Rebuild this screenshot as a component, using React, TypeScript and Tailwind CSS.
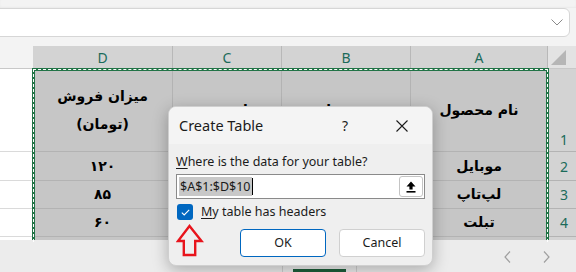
const ui = "font-['Noto_Sans',sans-serif]"
const fa = "font-['DejaVu_Sans',sans-serif]"

const dataRows = [
  { n: 2, d: "۱۲۰", a: "موبایل", h: "h-[29px]" },
  { n: 3, d: "۸۵", a: "لپ‌تاپ", h: "h-[28px]" },
  { n: 4, d: "۶۰", a: "تبلت", h: "h-[28px]" },
]

const cell = "border-r border-b border-[#b3b3b3] bg-[#c6c6c6] flex items-center justify-center"

const CreateTableDialog = () => {
  return (
    <div className={`absolute left-[168px] top-[106px] w-[265px] h-[160px] rounded-lg overflow-hidden shadow-[0_4px_16px_rgba(0,0,0,0.28)] border border-[#cfcfcf] bg-[#efefef] text-[#1b1b1b] ${ui}`}>
      {/* title bar */}
      <div className="h-[37px] bg-[#f4f4f4] flex items-center pl-[10px] pr-[24px]">
        <span className="text-[14.5px]">Create Table</span>
        <span className="ml-auto text-[14px] mr-[48px]">?</span>
        <svg width="12" height="12" viewBox="0 0 12 12" stroke="#1b1b1b" strokeWidth="1.1">
          <path d="M0.5 0.5 L11.5 11.5 M11.5 0.5 L0.5 11.5" />
        </svg>
      </div>

      {/* body */}
      <div className="px-[7px] pt-[9px]">
        <div className="h-[18px] flex items-center text-[12.5px] leading-none">
          <span className="underline underline-offset-2">W</span>here is the data for your table?
        </div>
        <div className="mt-[3px] h-[25px] bg-white border border-[#8a8a8a] flex items-center pl-[2px] pr-[1px]">
          <span className="bg-[#c8c8c8] text-[12.5px] leading-[19px] px-[1px]">$A$1:$D$10</span>
          <span className="w-px h-[17px] bg-black" />
          <div className="ml-auto w-[24px] h-[21px] bg-white border border-[#c4c4c4] rounded-[3px] flex items-center justify-center">
            <svg width="10" height="12" viewBox="0 0 10 12" fill="#000">
              <path d="M5 0.5 L9.5 5.5 L6.6 5.5 L6.6 8.5 L3.4 8.5 L3.4 5.5 L0.5 5.5 Z" />
              <rect x="0.5" y="10" width="9" height="1.6" />
            </svg>
          </div>
        </div>
        <div className="mt-[5px] h-[16px] flex items-center gap-[8px] pl-px">
          <div className="w-[16px] h-[16px] rounded-[3px] bg-[#0067c0] flex items-center justify-center">
            <svg width="9" height="7" viewBox="0 0 9 7" fill="none" stroke="white" strokeWidth="1.1">
              <path d="M0.8 3.6 L3.2 5.9 L8.2 0.9" />
            </svg>
          </div>
          <span className="text-[12.5px] leading-none">
            <span className="underline underline-offset-2">M</span>y table has headers
          </span>
        </div>
        <div className="mt-[4px] flex items-start">
          <svg width="28" height="33" viewBox="0 0 28 33" fill="none" stroke="#e8141c" strokeWidth="2.4" strokeLinejoin="miter">
            <path d="M13.5 2 L2 17 L7.8 17 L7.8 31 L19.2 31 L19.2 17 L25.5 17 Z" />
          </svg>
          <div className="ml-auto mt-[5px] flex gap-[13px]">
            <button className="w-[86px] h-[28px] bg-white border border-[#0067c0] rounded-[4px] text-[12.5px]">OK</button>
            <button className="w-[86px] h-[28px] bg-white border border-[#d0d0d0] rounded-[4px] text-[12.5px]">Cancel</button>
          </div>
        </div>
      </div>
    </div>
  )
}

export default function App() {
  return (
    <div className="relative w-[576px] h-[272px] overflow-hidden bg-[#f3f3f3]">
      {/* formula bar */}
      <div className="h-[8px] bg-[#f3f3f3] shadow-[inset_0_-1px_2px_rgba(0,0,0,0.04)]" />
      <div className="h-[29px] -ml-[10px] mr-[6px] bg-white border border-[#d6d6d6] rounded-r-md flex items-center justify-end pr-[6px]">
        <svg width="12" height="7" viewBox="0 0 12 7" fill="none" stroke="#8a8a8a" strokeWidth="1">
          <path d="M0.5 0.5 L6 6 L11.5 0.5" />
        </svg>
      </div>
      <div className="h-[9px]" />

      {/* sheet grid */}
      <div className={`grid grid-cols-[33px_140px_109px_129px_137px_32px] ${fa}`}>
        {/* column headers */}
        <div className="h-[23px] border-b border-[#c8c8c8]" />
        {["D", "C", "B", "A"].map((c) => (
          <div key={c} className={`h-[23px] bg-[#d3d3d3] border-r border-b border-[#b8b8b8] flex items-center justify-center text-[14px] text-[#1b6b5a] ${ui}`}>
            {c}
          </div>
        ))}
        <div className="h-[23px] bg-[#e3e3e3] border-b border-[#c8c8c8] pl-[3px] pt-[3px]">
          <svg width="16" height="17" viewBox="0 0 16 17">
            <path d="M15 1 L15 16 L0 16 Z" fill="#b6b6b6" />
          </svg>
        </div>

        {/* row 1 */}
        <div className="h-[83px] bg-white border-b border-[#dadada]" />
        <div className={`${cell} h-[83px] flex-col text-[14px] leading-[28px] font-bold`} dir="rtl">
          <span>میزان فروش</span>
          <span>(تومان)</span>
        </div>
        <div className={`${cell} h-[83px] text-[14px] font-bold`} dir="rtl">تعداد فروش</div>
        <div className={`${cell} h-[83px] text-[14px] font-bold`} dir="rtl">قیمت واحد</div>
        <div className={`${cell} h-[83px] text-[14px] font-bold`} dir="rtl">نام محصول</div>
        <div className={`h-[83px] bg-[#d3d3d3] border-b border-[#b3b3b3] flex items-end justify-center pb-[1px] text-[14px] text-[#1b6b5a] ${ui}`}>1</div>

        {/* data rows */}
        {dataRows.map((r) => (
          <div key={r.n} className="contents">
            <div className={`${r.h} bg-white border-b border-[#dadada]`} />
            <div className={`${cell} ${r.h} text-[14px] font-bold`} dir="rtl">{r.d}</div>
            <div className={`${cell} ${r.h}`} />
            <div className={`${cell} ${r.h}`} />
            <div className={`${cell} ${r.h} text-[14px] font-bold`} dir="rtl">{r.a}</div>
            <div className={`${r.h} bg-[#d3d3d3] border-b border-[#b3b3b3] flex items-center justify-center text-[14px] text-[#1b6b5a] ${ui}`}>{r.n}</div>
          </div>
        ))}

        {/* cut-off row 5 */}
        <div className="h-[3px] bg-white" />
        <div className="h-[3px] bg-[#c6c6c6] border-r border-[#b3b3b3]" />
        <div className="h-[3px] bg-[#c6c6c6] border-r border-[#b3b3b3]" />
        <div className="h-[3px] bg-[#c6c6c6] border-r border-[#b3b3b3]" />
        <div className="h-[3px] bg-[#c6c6c6] border-r border-[#b3b3b3]" />
        <div className="h-[3px] bg-[#d3d3d3]" />
      </div>

      {/* sheet tabs bar */}
      <div className="h-[32px] bg-[#ececec] flex items-end relative">
        <div className="ml-[282px] w-[75px] h-[7px] border-l border-r border-[#cfcfcf] flex justify-center items-end">
          <div className="w-[53px] h-[3px] bg-[#1e5e3a]" />
        </div>
        <span className={`ml-[20px] mb-[4px] text-[12px] leading-[14px] text-[#444] ${ui}`}>Sheet1</span>
        <div className="ml-auto mr-[26px] mb-[9px] flex gap-[32px]">
          <svg width="7" height="12" viewBox="0 0 7 12" fill="none" stroke="#a0a0a0" strokeWidth="1.2">
            <path d="M6 0.5 L1 6 L6 11.5" />
          </svg>
          <svg width="7" height="12" viewBox="0 0 7 12" fill="none" stroke="#a0a0a0" strokeWidth="1.2">
            <path d="M1 0.5 L6 6 L1 11.5" />
          </svg>
        </div>
      </div>

      {/* copy marquee around A1:D10 */}
      <div className="absolute left-[32px] top-[68px] w-[517px] h-[172px] border-[3px] border-b-0 border-[#217346]">
        <div className="absolute -left-[2px] -top-[2px] -right-[2px] -bottom-[2px] border border-b-0 border-dashed border-white" />
      </div>

      <CreateTableDialog />
    </div>
  )
}
